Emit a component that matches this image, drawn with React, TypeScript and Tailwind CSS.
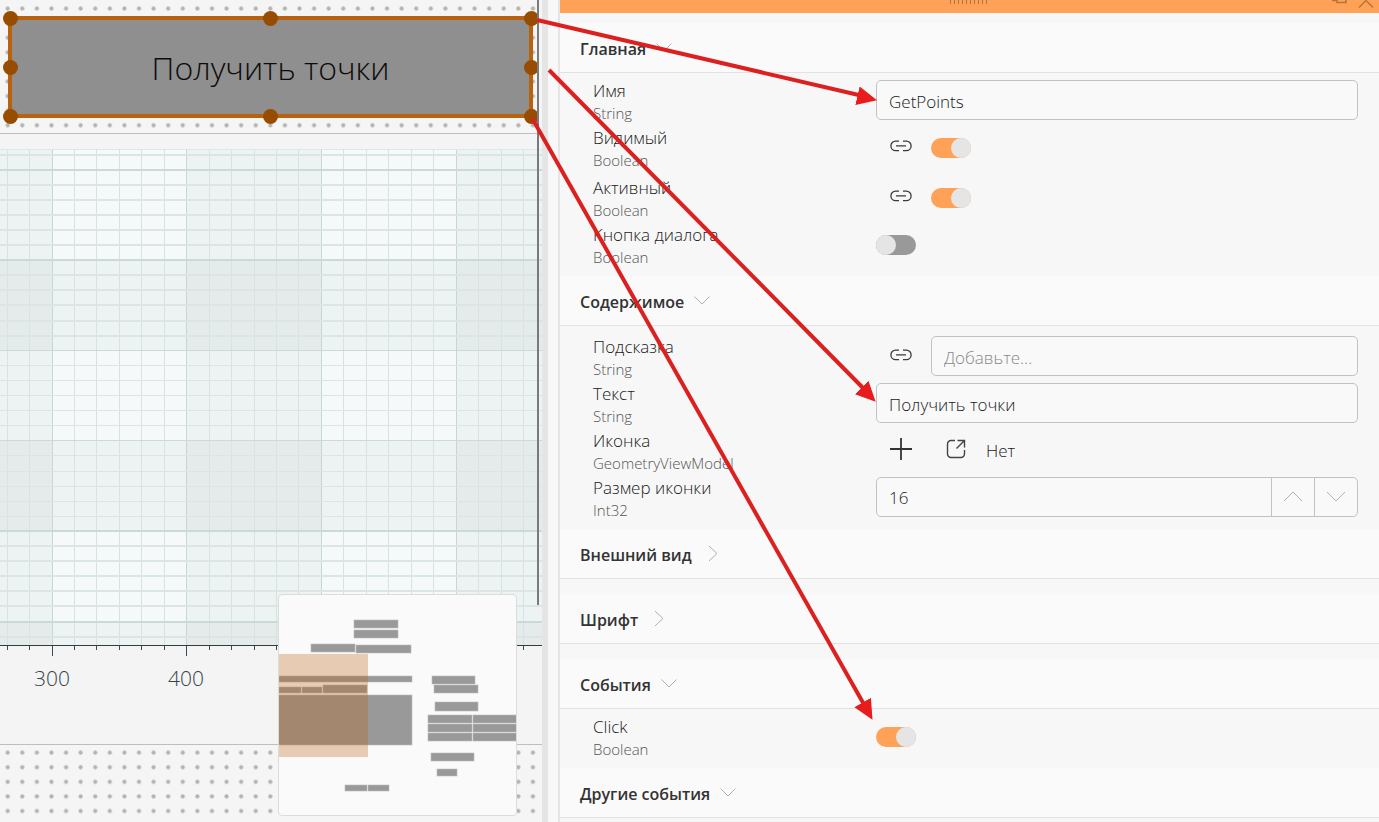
import { useId, useState } from "react";
import type { ReactNode } from "react";
import clsx from "clsx";

const handles = [
  [10, 18], [270, 18], [531, 18],
  [10, 67], [531, 67],
  [10, 116], [270, 116], [531, 116],
];

// x, y, width, height
const mapBlocks = [
  [354, 620, 44, 8], [354, 630, 44, 8],
  [311, 644, 44, 8], [356, 645, 55, 8],
  [279, 676, 133, 6],
  [279, 687, 22, 6], [302, 687, 20, 6], [323, 685, 44, 8],
  [278, 695, 134, 50],
  [432, 676, 43, 8], [434, 685, 44, 8], [435, 702, 43, 9],
  [428, 715, 44, 8], [473, 715, 44, 8],
  [428, 724, 44, 8], [473, 724, 44, 8],
  [428, 733, 44, 8], [473, 733, 44, 8],
  [431, 753, 43, 8], [437, 769, 20, 7],
  [345, 785, 22, 6], [368, 785, 21, 6],
];

const STEP_X = 134.7 / 6;
const STEP_Y = 90.3 / 6;
const xLines = Array.from({ length: 25 }, (_, i) => ({ pos: 52 + (i - 2) * STEP_X, major: (i - 2) % 6 === 0 }));
const yLines = Array.from({ length: 33 }, (_, i) => ({ pos: 170 + (i - 1) * STEP_Y, major: (i - 1) % 6 === 0 }));

function ChartGrid() {
  return (
    <svg className="absolute left-0 top-[149px]" width="542" height="510" viewBox="0 149 542 510">
      <rect x="0" y="149" width="542" height="496" fill="#f6f9f9" />
      <g fill="#84a0a0" fillOpacity="0.07">
        <rect x="0" y="149" width="52" height="496" />
        <rect x="187" y="149" width="134" height="496" />
        <rect x="456" y="149" width="86" height="496" />
        <rect x="0" y="260" width="542" height="90" />
        <rect x="0" y="441" width="542" height="90" />
        <rect x="0" y="621" width="542" height="24" />
      </g>
      <g shapeRendering="crispEdges">
        {xLines.map((l) => (
          <line key={l.pos} x1={l.pos} x2={l.pos} y1="149" y2="645" stroke={l.major ? "#c6d6d5" : "#d7e3e2"} />
        ))}
        {yLines.filter((l) => l.pos < 645).map((l) => (
          <line key={l.pos} x1="0" x2="542" y1={l.pos} y2={l.pos} stroke={l.major ? "#cbdad9" : "#dae5e4"} strokeWidth={l.pos < 340 || l.pos > 530 ? 2 : 1} />
        ))}
        <rect x="0" y="149" width="542" height="1" fill="#dfe8e8" />
        <rect x="0" y="645" width="542" height="1" fill="#31403f" />
        {xLines.map((l) => (
          <line key={l.pos} x1={l.pos} x2={l.pos} y1="646" y2={l.major ? 656 : 650} stroke="#3c4c4b" />
        ))}
      </g>
    </svg>
  );
}

function MiniMap() {
  return (
    <div className="absolute left-[278px] top-[594px] rounded border border-[#dcdcdc] bg-[#fafafa] overflow-hidden">
      <svg className="block" width="237" height="220" viewBox="279 595 237 220">
        {mapBlocks.map(([x, y, w, h]) => (
          <rect key={`${x}-${y}`} x={x} y={y} width={w} height={h} fill="#999999" stroke="#bdbdbd" strokeWidth="0.6" />
        ))}
        <rect x="279" y="654" width="89" height="103" fill="#bd6410" fillOpacity="0.3" />
      </svg>
    </div>
  );
}

function Canvas() {
  return (
    <main className="relative w-[542px] shrink-0 overflow-hidden bg-[#f5f5f5]">
      <svg className="absolute inset-0 w-full h-full">
        <defs>
          <pattern id="dots" width="14.59" height="14.59" x="0.4" y="1.3" patternUnits="userSpaceOnUse">
            <circle cx="7.3" cy="7.3" r="2.1" fill="#b3b3b3" />
          </pattern>
        </defs>
        <rect width="537" height="100%" fill="url(#dots)" />
      </svg>
      <div className="absolute left-0 right-0 top-[133px] h-[612px] border-y border-[#bebebe] bg-[#f4f4f4]" />
      <ChartGrid />
      <span className="absolute left-[22px] top-[664px] w-[60px] text-center text-[21px] font-light leading-7 text-[#35444a]">300</span>
      <span className="absolute left-[156px] top-[664px] w-[60px] text-center text-[21px] font-light leading-7 text-[#35444a]">400</span>

      {/* Selected element */}
      <button
        type="button"
        className="absolute left-[8px] top-[16px] w-[525px] h-[102px] border-4 border-[#b8620f] bg-[#8f8f8f] pt-0.5 text-[32px] font-light text-[#0c0c0c]"
      >
        Получить точки
      </button>
      <svg className="absolute left-0 top-0" width="537" height="130">
        {handles.map(([x, y]) => (
          <circle key={`${x}-${y}`} cx={x + 0.5} cy={y + 0.5} r="7.5" fill="#984c00" />
        ))}
      </svg>
      <div className="absolute left-[537px] top-0 w-0.5 h-[605px] bg-[#787b7b]" />
      <MiniMap />
    </main>
  );
}

function LinkIcon() {
  return (
    <svg width="22" height="12" viewBox="0 0 22 12" fill="none" stroke="#3a3a3a" strokeWidth="1.3">
      <path d="M9 1.2H5.6a4.6 4.6 0 0 0 0 9.4H9M13 1.2h3.4a4.6 4.6 0 0 1 0 9.4H13M6 5.900h10" />
    </svg>
  );
}

function Chevron({ dir, className }: { dir: "up" | "down" | "right"; className?: string }) {
  const d = { up: "M1 13l9-9 9 9", down: "M2.500 4.500 10 12l7.500-7.500", right: "M9 1l8 7.500L9 16" };
  return (
    <svg width="20" height="18" viewBox="0 0 20 18" fill="none" stroke="currentColor" className={className}>
      <path d={d[dir]} />
    </svg>
  );
}

function Toggle({ id, initial }: { id: string; initial: boolean }) {
  const [on, setOn] = useState(initial);
  return (
    <input
      id={id}
      type="checkbox"
      role="switch"
      checked={on}
      onChange={() => setOn(!on)}
      className="appearance-none mt-0.5 flex w-10 h-5 rounded-full bg-[#999999] checked:bg-[#ffa257] checked:justify-end before:block before:w-5 before:h-5 before:rounded-full before:bg-[#e5e5e5]"
    />
  );
}

function Row({ label, type, link, tall, children }: { label: string; type: string; link?: boolean; tall?: boolean; children: (id: string) => ReactNode }) {
  const id = useId();
  return (
    <div className={clsx("flex items-start pl-[33px] pr-[21px]", tall ? "h-[50px]" : "h-[47px]")}>
      <label htmlFor={id} className="w-[283px] shrink-0">
        <span className="block text-[17px] leading-[22px] text-[#1a1a1a]">{label}</span>
        <span className="block text-[15px] leading-[22px] text-[#555555]">{type}</span>
      </label>
      <div className="flex h-10 flex-1 items-center">
        {link && (
          <button type="button" aria-label="Привязка" className="w-[55px] shrink-0 pl-3.5 pb-0.5">
            <LinkIcon />
          </button>
        )}
        {children(id)}
      </div>
    </div>
  );
}

function Section({ title, open, children }: { title: string; open?: boolean; children?: ReactNode }) {
  return (
    <section>
      <h2 className="border-b border-[#e2e2e2] bg-[#fafafa]">
        <button type="button" aria-expanded={!!open} className="flex h-[49px] w-full items-center gap-2 pl-5 pt-0.5 text-[16px] font-semibold text-[#333333]">
          {title}
          <Chevron dir={open ? "down" : "right"} className="mb-0.5 text-[#b0b0b0]" />
        </button>
      </h2>
      {children}
    </section>
  );
}

const field = "h-10 w-full min-w-0 rounded-[5px] border border-[#c2c2c2] bg-[#f9f9f9] px-3 pt-0.5 text-[17px] text-[#1a1a1a] placeholder:text-[#888888] outline-none";

function Inspector() {
  return (
    <aside className="min-w-0 flex-1 border-l-2 border-[#e5e5e5] bg-[#f7f7f7] font-light">
      <div className="flex h-[13px] overflow-hidden bg-[#ffa257]">
        <div className="flex-1" />
        <svg className="shrink-0" width="40" height="5" shapeRendering="crispEdges">
          {Array.from({ length: 10 }, (_, i) => (
            <rect key={i} x={i * 4} y="0" width="1" height="4" fill="#b5733e" />
          ))}
        </svg>
        <div className="flex flex-1 justify-end">
          <button type="button" aria-label="Закрепить" className="flex items-start">
            <svg width="20" height="8" viewBox="0 0 20 8" fill="none" stroke="#b5733e">
              <path d="M1 .5h5M6 0v2.500h9V0" strokeWidth="1.600" />
            </svg>
          </button>
          <button type="button" aria-label="Закрыть" className="flex items-start px-1">
            <svg width="20" height="9" viewBox="0 0 20 9" fill="none" stroke="#b5733e" strokeWidth="1.4">
              <path d="M4 7.5 11 .5l7 7" />
            </svg>
          </button>
        </div>
      </div>

      <div className="pt-2.5">
        <Section title="Главная" open>
          <div className="pt-[7px] pb-[5px]">
            <Row label="Имя" type="String">
              {(id) => <input id={id} type="text" defaultValue="GetPoints" className={field} />}
            </Row>
            <Row label="Видимый" type="Boolean" link tall>
              {(id) => <Toggle id={id} initial />}
            </Row>
            <Row label="Активный" type="Boolean" link>
              {(id) => <Toggle id={id} initial />}
            </Row>
            <Row label="Кнопка диалога" type="Boolean">
              {(id) => <Toggle id={id} initial={false} />}
            </Row>
          </div>
        </Section>

        <Section title="Содержимое" open>
          <div className="pt-2.5 pb-[5px]">
            <Row label="Подсказка" type="String" link>
              {(id) => <input id={id} type="text" placeholder="Добавьте..." className={field} />}
            </Row>
            <Row label="Текст" type="String">
              {(id) => <input id={id} type="text" defaultValue="Получить точки" className={field} />}
            </Row>
            <Row label="Иконка" type="GeometryViewModel">
              {(id) => (
                <>
                  <button id={id} type="button" aria-label="Добавить" className="pb-0.5 pl-3.5">
                    <svg width="22" height="22" viewBox="0 0 22 22" stroke="#333333" strokeWidth="1.8">
                      <path d="M0 11h22M11 0v22" />
                    </svg>
                  </button>
                  <button type="button" aria-label="Открыть" className="ml-[34px] pb-0.5">
                    <svg width="20" height="20" viewBox="0 0 20 20" fill="none" stroke="#444444" strokeWidth="1.4">
                      <path d="M9 1.5H5A3.5 3.5 0 0 0 1.500 5v10A3.500 3.500 0 0 0 5 18.500h10a3.500 3.500 0 0 0 3.500-3.500v-4M11.500 1.500h7v7M18.500 1.500l-8 8" />
                    </svg>
                  </button>
                  <span className="ml-5 pt-0.5 text-[17px] text-[#1a1a1a]">Нет</span>
                </>
              )}
            </Row>
            <Row label="Размер иконки" type="Int32">
              {(id) => (
                <div className="flex h-10 w-full overflow-hidden rounded-[5px] border border-[#c2c2c2] bg-[#f9f9f9]">
                  <input id={id} type="text" inputMode="numeric" defaultValue="16" className="min-w-0 flex-1 px-3 pt-0.5 text-[17px] text-[#1a1a1a] outline-none" />
                  <button type="button" aria-label="Больше" className="flex w-[43px] items-center justify-center border-l border-[#c2c2c2] text-[#b0b0b0]">
                    <Chevron dir="up" />
                  </button>
                  <button type="button" aria-label="Меньше" className="flex w-[43px] items-center justify-center border-l border-[#c2c2c2] text-[#b0b0b0]">
                    <svg width="20" height="18" viewBox="0 0 20 18" fill="none" stroke="currentColor">
                      <path d="M1 4l9 9 9-9" />
                    </svg>
                  </button>
                </div>
              )}
            </Row>
          </div>
        </Section>

        <Section title="Внешний вид">
          <div className="h-[15px]" />
        </Section>
        <Section title="Шрифт">
          <div className="h-[15px]" />
        </Section>
        <Section title="События" open>
          <div className="pt-[7px] pb-[5px]">
            <Row label="Click" type="Boolean">
              {(id) => <Toggle id={id} initial />}
            </Row>
          </div>
        </Section>
        <Section title="Другие события" open />
      </div>
    </aside>
  );
}

// Callouts from the selected element to its properties
function Arrows() {
  return (
    <svg className="pointer-events-none absolute left-0 top-0" width="900" height="740" stroke="#dc2020" strokeWidth="4" fill="none">
      <defs>
        <marker id="head" markerUnits="userSpaceOnUse" markerWidth="20" markerHeight="20" refX="19" refY="10" orient="auto">
          <path d="M0 0.500 20 10 0 19.500z" fill="#e81c1c" stroke="none" />
        </marker>
      </defs>
      <path d="M537 20 863 96" />
      <path d="M549 70 866 391" />
      <path d="M532 118 866 708" />
      <g stroke="none" markerEnd="url(#head)">
        <path d="M537 20 876 100" />
        <path d="M549 70 875 401" />
        <path d="M532 118 872 719" />
      </g>
    </svg>
  );
}

export default function App() {
  return (
    <div className="relative flex min-h-screen overflow-hidden bg-[#f7f7f7] font-['Open_Sans','Noto_Sans',sans-serif]">
      <Canvas />
      <div className="w-1.5 shrink-0 bg-[#e5e5e5]" />
      <div className="w-2.5 shrink-0 bg-[#f8f8f8]" />
      <Inspector />
      <Arrows />
    </div>
  );
}
